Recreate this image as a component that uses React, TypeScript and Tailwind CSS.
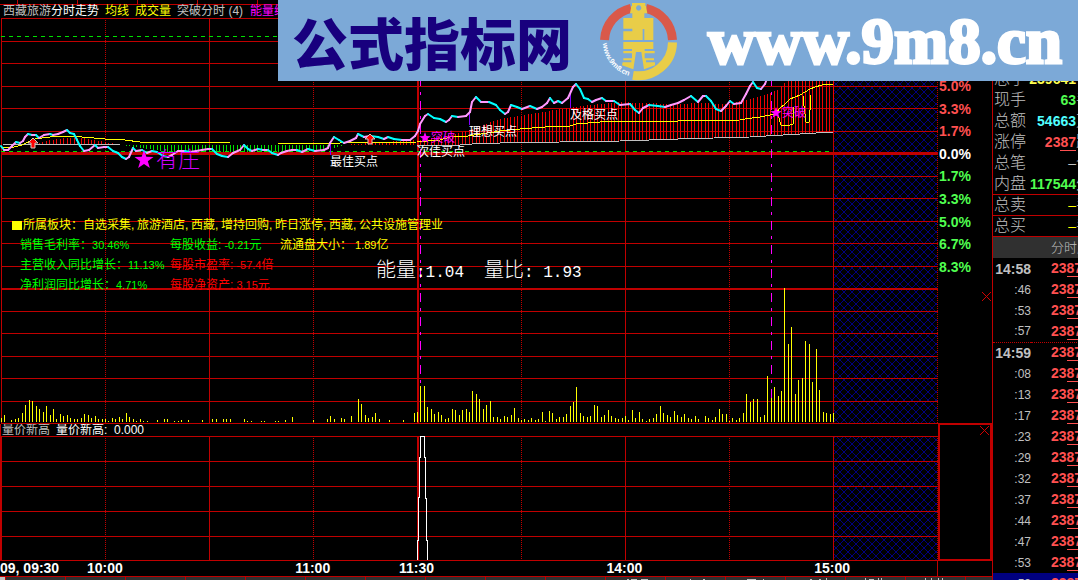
import React from "react";

type Point = [number, number];

const GRID = "#c00000";
const CJK = "font-['Liberation_Sans','Noto_Sans_CJK_SC',sans-serif]";

const PRICE: Point[] = [
  [1, 146], [4, 150], [8, 150], [12, 146], [16, 142], [20, 143], [23, 141], [25, 137], [28, 134], [32, 135],
  [36, 135], [39, 138], [44, 135], [50, 134], [53, 135], [58, 134], [63, 132], [67, 130], [70, 133], [74, 134],
  [77, 140], [80, 146], [84, 151], [89, 150], [95, 145], [98, 148], [104, 147], [108, 147], [113, 151], [118, 153],
  [122, 157], [126, 159], [129, 157], [133, 148], [136, 151], [142, 150], [147, 153], [152, 151], [157, 152],
  [163, 156], [168, 157], [172, 155], [178, 151], [185, 151], [190, 152], [196, 151], [202, 150], [208, 149],
  [212, 149], [217, 154], [222, 156], [228, 157], [233, 153], [240, 150], [244, 145], [248, 149], [252, 151],
  [258, 149], [263, 150], [268, 150], [272, 153], [278, 155], [281, 153], [287, 151], [292, 150], [297, 150],
  [302, 152], [308, 149], [315, 151], [324, 150], [328, 148], [330, 143], [334, 137], [339, 140], [344, 143],
  [350, 141], [356, 138], [358, 134], [364, 137], [370, 136], [378, 137], [384, 139], [388, 137], [394, 139],
  [402, 140], [410, 140], [415, 136], [418, 131], [420, 124], [425, 116], [428, 114], [434, 118], [440, 119],
  [446, 122], [449, 120], [452, 116], [458, 117], [466, 116], [470, 112], [472, 102], [476, 97], [481, 102],
  [489, 102], [496, 105], [500, 110], [505, 114], [508, 112], [511, 105], [517, 107], [522, 109], [530, 106],
  [537, 109], [542, 107], [547, 103], [550, 98], [554, 103], [558, 101], [562, 103], [568, 98], [573, 87],
  [576, 84], [580, 89], [584, 98], [588, 99], [592, 102], [596, 100], [602, 98], [606, 101], [614, 101],
  [620, 105], [630, 104], [635, 110], [639, 113], [643, 108], [649, 105], [658, 106], [665, 107], [671, 105],
  [678, 103], [684, 100], [691, 96], [698, 102], [703, 96], [706, 96], [711, 101], [716, 109], [721, 111],
  [726, 106], [730, 101], [734, 104], [741, 103], [746, 94], [750, 86], [753, 82], [757, 88], [761, 89],
  [765, 84], [768, 76], [780, 50], [800, 24], [833, 22],
];

const AVERAGE: Point[] = [
  [1, 147], [14, 147], [22, 145], [28, 142], [35, 139], [50, 137], [75, 136], [82, 137], [105, 139], [125, 140],
  [140, 142], [175, 142], [230, 143], [278, 143], [340, 143], [417, 142], [440, 140], [450, 137], [468, 136],
  [500, 131], [520, 129], [545, 127], [570, 126], [576, 124], [600, 122], [625, 121], [678, 121], [740, 120],
  [745, 119], [760, 117], [775, 114], [780, 108], [785, 104], [790, 99], [795, 97], [800, 95], [805, 92],
  [810, 89], [815, 87], [822, 85], [833, 84],
];

const BASE: Point[] = [
  [1, 144], [120, 145], [417, 145], [460, 145], [472, 144], [500, 143], [560, 142], [620, 141], [678, 139],
  [750, 137], [800, 134], [833, 132],
];

// Far end of each histogram bar; above the base line it is red, below it green.
const HISTOGRAM: Point[] = [
  [36, 144], [50, 140], [67, 138], [82, 138], [100, 141], [120, 145], [140, 148], [170, 152], [300, 152],
  [330, 149], [345, 145], [380, 142], [417, 140], [450, 135], [470, 130], [485, 124], [500, 119], [530, 114],
  [560, 109], [590, 105], [620, 102], [640, 103], [678, 104], [700, 103], [727, 104], [740, 101], [760, 96],
  [770, 93], [778, 89], [786, 81], [795, 70], [833, 60],
];

const VOLUME: Point[] = [
  [1, 4], [4, 7], [11, 2], [15, 3], [18, 4], [22, 9], [25, 17], [29, 22], [32, 21], [36, 16], [39, 13], [43, 10],
  [46, 16], [50, 7], [53, 13], [56, 3], [60, 8], [63, 6], [67, 7], [70, 4], [74, 3], [77, 3], [81, 4], [84, 8],
  [88, 7], [91, 4], [95, 6], [98, 3], [102, 3], [105, 3], [108, 1], [112, 4], [115, 3], [119, 5], [122, 3],
  [126, 9], [129, 5], [133, 3], [136, 1], [140, 3], [143, 1], [147, 1], [157, 2], [164, 3], [167, 3], [174, 1],
  [178, 1], [181, 2], [188, 2], [202, 2], [212, 3], [216, 3], [223, 3], [226, 3], [230, 3], [244, 3], [247, 1],
  [251, 1], [261, 1], [264, 1], [275, 1], [278, 1], [285, 2], [292, 5], [313, 2], [327, 3], [330, 6], [334, 3],
  [341, 4], [344, 3], [351, 6], [358, 23], [361, 18], [365, 7], [368, 4], [372, 5], [375, 9], [379, 3], [389, 2],
  [403, 2], [414, 9], [417, 10], [420, 36], [424, 36], [427, 15], [431, 13], [434, 8], [438, 10], [441, 7],
  [445, 3], [448, 4], [452, 13], [455, 12], [459, 7], [462, 12], [466, 13], [469, 10], [472, 31], [476, 28],
  [479, 23], [483, 13], [486, 17], [490, 21], [493, 5], [497, 5], [500, 3], [504, 6], [507, 5], [511, 7],
  [514, 14], [518, 4], [521, 2], [524, 3], [528, 2], [531, 4], [535, 2], [538, 3], [542, 10], [545, 1],
  [549, 11], [552, 9], [556, 3], [559, 5], [563, 5], [566, 8], [570, 16], [573, 20], [576, 35], [580, 9],
  [583, 6], [587, 5], [590, 6], [594, 17], [597, 16], [601, 5], [604, 7], [608, 12], [611, 6], [615, 4],
  [618, 3], [622, 4], [625, 6], [628, 2], [632, 12], [635, 4], [639, 10], [642, 3], [646, 1], [649, 3],
  [653, 4], [656, 8], [660, 16], [663, 9], [667, 7], [670, 5], [674, 11], [677, 7], [681, 5], [684, 8],
  [688, 4], [691, 3], [695, 6], [698, 3], [705, 6], [708, 4], [712, 2], [715, 5], [719, 13], [722, 8],
  [726, 8], [729, 1], [732, 4], [736, 2], [739, 4], [743, 9], [746, 28], [750, 20], [753, 23], [757, 23],
  [760, 5], [764, 7], [767, 46], [771, 24], [774, 35], [778, 26], [781, 31], [784, 134], [788, 78], [791, 95],
  [795, 28], [798, 42], [802, 44], [805, 81], [809, 78], [812, 40], [816, 73], [819, 32], [823, 10], [826, 9],
  [830, 8], [833, 9],
];

const toPoints = (pts: Point[]) => pts.map(([x, y]) => `${x},${y}`).join(" ");

function valueAt(pts: Point[], x: number) {
  for (let i = 1; i < pts.length; i++) {
    const [x0, y0] = pts[i - 1];
    const [x1, y1] = pts[i];
    if (x <= x1) return y0 + ((y1 - y0) * (x - x0)) / (x1 - x0);
  }
  return pts[pts.length - 1][1];
}

const BARS = Array.from({ length: 230 }, (_, i) => Math.round(39 + (i * 104) / 30)).filter((x) => x <= 833);

function Grid({ rows, top, bottom }: { rows: number[]; top: number; bottom: number }) {
  return (
    <g stroke={GRID} strokeWidth="1" shapeRendering="crispEdges">
      {rows.map((y) => (
        <line key={y} x1="1" x2="938" y1={y + 0.5} y2={y + 0.5} />
      ))}
      {[1, 209, 625, 833].map((x) => (
        <line key={x} x1={x + 0.5} x2={x + 0.5} y1={top} y2={bottom} />
      ))}
      {[105, 313, 521, 729, 937].map((x) => (
        <line key={x} x1={x + 0.5} x2={x + 0.5} y1={top} y2={bottom} strokeDasharray="1 1" />
      ))}
      <line x1="418" x2="418" y1={top} y2={bottom} strokeWidth="2" />
    </g>
  );
}

function Hatch({ id }: { id: string }) {
  return (
    <defs>
      <pattern id={id} width="8" height="8" patternUnits="userSpaceOnUse">
        <path d="M0 0L8 8M8 0L0 8" stroke="#000080" strokeWidth="1" shapeRendering="crispEdges" />
      </pattern>
    </defs>
  );
}

function Star({ x, y, r }: { x: number; y: number; r: number }) {
  const pts = Array.from({ length: 10 }, (_, i): Point => {
    const a = (Math.PI * i) / 5 - Math.PI / 2;
    const k = i % 2 ? r * 0.4 : r;
    return [x + k * Math.cos(a), y + k * Math.sin(a)];
  });
  return <polygon points={toPoints(pts)} fill="#ff00ff" />;
}

function UpArrow({ x, y }: { x: number; y: number }) {
  return (
    <path
      d={`M${x} ${y - 5}l5 5h-3v5h-4v-5h-3z`}
      fill="#ff0000"
      stroke="#d8c8c0"
      strokeWidth="1"
    />
  );
}

function PriceChart() {
  const rows = [18, 41, 63, 86, 108, 131, 176, 198, 221, 243, 266, 311, 333, 356, 378, 401, 423];
  return (
    <svg viewBox="0 18 938 406" className="block h-auto w-full" role="img" aria-label="分时走势">
      <Hatch id="hatch-price" />
      <rect x="834" y="18" width="103" height="405" fill="url(#hatch-price)" />
      <Grid rows={rows} top={18} bottom={424} />
      <g shapeRendering="crispEdges">
        <rect x="1" y="152" width="937" height="3" fill={GRID} />
        <rect x="1" y="288" width="937" height="2" fill={GRID} />
        <path d="M1 36.5H833M1 151.5H833" stroke="#00e000" strokeDasharray="4 4" />
        <path d="M420.5 77V422M771.5 77V422" stroke="#ff00ff" strokeDasharray="9 6 3 6" />
        {BARS.map((x) => {
          const base = Math.round(valueAt(BASE, x));
          const end = Math.round(valueAt(HISTOGRAM, x));
          return (
            <line key={x} x1={x + 0.5} x2={x + 0.5} y1={base} y2={end} stroke={end < base ? "#f00000" : "#00e000"} />
          );
        })}
        <g fill="#ffff00">
          {VOLUME.map(([x, h]) => (
            <rect key={x} x={x} y={422 - h} width="1" height={h} />
          ))}
        </g>
        <path d="M330.5 142v13M469.5 112v13M570.5 94v14" stroke="#8000ff" />
        <polyline points={toPoints(BASE)} fill="none" stroke="#c0c0c0" />
        <polyline points={toPoints(AVERAGE)} fill="none" stroke="#ffff00" />
        <path
          d="M776 113l3 5l2 7h9l3-1v-12l1-5M803 96l1 10l2 16h3l1-12v-15"
          fill="none"
          stroke="#ffff00"
        />
      </g>
      <g strokeWidth="2" strokeLinecap="round">
        {PRICE.slice(1).map(([x, y], i) => {
          const [px, py] = PRICE[i];
          return <line key={x} x1={px} y1={py} x2={x} y2={y} stroke={y > py ? "#00ffff" : "#ff99ff"} />;
        })}
      </g>
      <UpArrow x={33} y={143} />
      <UpArrow x={370} y={139} />
      <Star x={144} y={160} r={10} />
      <Star x={425} y={138} r={6} />
      <Star x={776} y={113} r={6} />
      <g className={CJK} fontSize="12" fill="#ffffff">
        <text x="330" y="166">最佳买点</text>
        <text x="417" y="156">次佳买点</text>
        <text x="469" y="136">理想买点</text>
        <text x="570" y="119">及格买点</text>
        <text x="431" y="142" fill="#ff00ff">突破</text>
        <text x="782" y="117" fill="#ff00ff">突破</text>
        <text x="156" y="167" fontSize="22" fontWeight="300" fill="#d000ff">有庄</text>
      </g>
    </svg>
  );
}

function SignalChart() {
  return (
    <svg viewBox="0 436 938 125" className="block h-auto w-full" role="img" aria-label="量价新高">
      <Hatch id="hatch-signal" />
      <rect x="834" y="436" width="103" height="124" fill="url(#hatch-signal)" />
      <Grid rows={[436, 461, 486, 511, 536, 560]} top={436} bottom={561} />
      <rect x="0" y="436" width="2" height="125" fill={GRID} />
      <path
        d="M417.5 560V540H418.5V497H419.5V457H420.5V436.5H424.5V457H425.5V498H426.5V540H427.5V560"
        fill="none"
        stroke="#ffffff"
        shapeRendering="crispEdges"
      />
    </svg>
  );
}

function Comma() {
  return <span className="inline-block w-[6px]">,</span>;
}

function StockInfo() {
  const sectors = ["自选采集", "旅游酒店", "西藏", "增持回购", "昨日涨停", "西藏", "公共设施管理业"];
  return (
    <div className="absolute left-3 top-[197px] whitespace-nowrap text-[12px] leading-5 text-[#00ff00]">
      <p className="flex items-center text-[#ffff00]">
        <span className="mr-px h-[9px] w-[10px] bg-[#ffff00]" />
        <span>
          所属板块：
          {sectors.map((s, i) => (
            <React.Fragment key={i}>
              {i > 0 && <Comma />}
              {s}
            </React.Fragment>
          ))}
        </span>
      </p>
      <div className="grid grid-cols-[150px_110px_auto] pl-2">
        <p>销售毛利率：<span className="text-[11px]">30.46%</span></p>
        <p>每股收益:<span className="text-[11px]"> -0.21</span>元</p>
        <p className="text-[#ffff00]">流通盘大小：<span className="text-[11px]"> 1.89</span>亿</p>
        <p>主营收入同比增长：<span className="text-[11px]">11.13%</span></p>
        <p className="col-span-2 text-[#ff0000]">每股市盈率:<span className="text-[11px]"> -57.4</span>倍</p>
        <p>净利润同比增长：<span className="text-[11px]">4.71%</span></p>
        <p className="col-span-2 text-[#ff0000]">每股净资产:<span className="text-[11px]"> 3.15</span>元</p>
      </div>
    </div>
  );
}

function EnergyReadout() {
  return (
    <div className="absolute left-[376px] top-[242px] flex gap-5 whitespace-nowrap font-['Liberation_Mono','Noto_Sans_CJK_SC',monospace] text-[16px] leading-6 text-white">
      <p><span className="text-[20px] font-light">能量</span>:1.04</p>
      <p><span className="text-[20px] font-light">量比</span>: 1.93</p>
    </div>
  );
}

function Ticks({ first }: { first: string }) {
  return (
    <div className="flex h-full overflow-hidden">
      <div className={`${first} shrink-0 border-r border-[#c00000]`} />
      {Array.from({ length: 16 }, (_, i) => (
        <div key={i} className="w-[60px] shrink-0 border-r border-[#c00000]" />
      ))}
    </div>
  );
}

function TabStrip() {
  return (
    <svg
      viewBox="0 0 993 3"
      className="block h-[3px] w-full bg-[#303030]"
      preserveAspectRatio="xMinYMin slice"
      shapeRendering="crispEdges"
      aria-hidden="true"
    >
      <rect width="5" height="3" fill="#c0c0c0" />
      <path
        d={Array.from({ length: 17 }, (_, i) => `M${5.5 + i * 60} 0v3`).join("")}
        stroke={GRID}
      />
      <path
        d="M627 2.500h2M631 2.500h6M641 2.500h7M690 2.500h1M703 2.500h2M747 2.500h9M763 2.500h1M810 2.500h2M819 2.500h2M826 1v2M865 1v2M869 2.500h5M878 1v2M881 1v2M925 1v2M931 1v2M938 1v2M942 1v2"
        stroke="#c0c0c0"
      />
    </svg>
  );
}

function CloseButton() {
  return (
    <button type="button" aria-label="关闭" className="block h-[11px] w-[11px]">
      <svg viewBox="0 0 11 11" className="block h-full w-full">
        <path d="M1 1L10 10M10 1L1 10" stroke="#d00000" strokeWidth="1" />
      </svg>
    </button>
  );
}

function Axis() {
  const labels = ["5.0%", "3.3%", "1.7%", "0.0%", "1.7%", "3.3%", "5.0%", "6.7%", "8.3%"];
  return (
    <div className="flex w-[55px] shrink-0 flex-col border-r border-[#c00000] pt-[75px] text-sm font-bold">
      <ol className="grid h-[203px] auto-rows-fr items-center pl-px leading-4">
        {labels.map((l, i) => (
          <li key={i} className={i < 3 ? "text-[#ff5050]" : i === 3 ? "text-white" : "text-[#50ff50]"}>
            {l}
          </li>
        ))}
      </ol>
      <div className="flex h-[145px] justify-end pt-[13px]">
        <CloseButton />
      </div>
      <div className="flex h-[138px] justify-end border-2 border-[#c00000]">
        <CloseButton />
      </div>
    </div>
  );
}

interface Quote {
  label: string;
  value: string;
  unit: string;
  tone: string;
  mark?: string;
  line?: boolean;
}

const QUOTES: Quote[] = [
  { label: "总手", value: "239641", unit: "手", tone: "font-bold text-[#ffff50]" },
  { label: "现手", value: "63", unit: "手", tone: "font-bold text-[#50ff50]" },
  { label: "总额", value: "54663", unit: "万", tone: "font-bold text-[#50ffff]" },
  { label: "涨停", value: "23", mark: "87", unit: "跌", tone: "font-bold text-[#ff5050]" },
  { label: "总笔", value: "–", unit: "个", tone: "text-[#c0c0c0]" },
  { label: "内盘", value: "117544", unit: "外", tone: "font-bold text-[#50ff50]", line: true },
  { label: "总卖", value: "–", unit: "手", tone: "text-[#ffff00]", line: true },
  { label: "总买", value: "–", unit: "手", tone: "text-[#ffff00]", line: true },
];

const TRADES = [
  "14:58", ":46", ":53", ":57", "14:59", ":08", ":13", ":17", ":23", ":29", ":32", ":37", ":44", ":47", ":53", ":59",
];

function QuotePanel() {
  return (
    <aside className="w-[85px] shrink-0 overflow-hidden pt-[69px] text-[#c0c0c0]">
      <dl>
        {QUOTES.map((q) => (
          <div
            key={q.label}
            className={`flex h-[21px] items-center border-b pl-px ${q.line ? "border-[#c00000]" : "border-transparent"}`}
          >
            <dt className="shrink-0 text-base font-light leading-5">{q.label}</dt>
            <dd className={`flex flex-1 justify-end text-sm leading-4 ${q.tone}`}>
              {q.value}
              {q.mark && <span className="border-b border-current">{q.mark}</span>}
            </dd>
            <span className="w-[2px] shrink-0 overflow-hidden text-base font-light leading-5">{q.unit}</span>
          </div>
        ))}
      </dl>
      <h2 className="h-[21px] whitespace-nowrap bg-[#303030] pl-[58px] text-[13px] font-light leading-[21px]">分时成交</h2>
      <table className="w-[98px] table-fixed border-collapse">
        <tbody>
          {TRADES.map((t, i) => {
            const minute = t.length === 5;
            const last = i === TRADES.length - 1;
            return (
              <tr
                key={i}
                className={`h-[21px] ${i === 3 ? "border-b border-dotted border-[#c00000]" : ""} ${last ? "bg-[#000080]" : ""}`}
              >
                <th
                  scope="row"
                  className={`w-[38px] p-0 text-right leading-4 ${minute ? "text-sm font-bold" : "text-xs font-normal"}`}
                >
                  {t}
                </th>
                <td className="p-0 pl-5 text-sm font-bold leading-4 text-[#ff5050]">
                  23<span className="inline-block border-b border-current">87</span>
                </td>
              </tr>
            );
          })}
        </tbody>
      </table>
    </aside>
  );
}

function Logo() {
  return (
    <svg viewBox="0 0 240 240" className="h-20 w-20 shrink-0" role="img" aria-label="www.9m8.cn">
      <g fill="none" strokeWidth="27">
        <path d="M13.500 117A102 102 0 0 1 93 22" stroke="#d9594a" />
        <path d="M138 22A102 102 0 0 1 217.500 117" stroke="#d9594a" />
        <path d="M217.500 124A102 102 0 0 1 99 223" stroke="#e9cd48" />
      </g>
      <g fill="#e9cd48">
        <path
          fillRule="evenodd"
          d="M96 6H136V15H138L142 37H133V51H160V117H133V84H128V117H70V91H97V83H70V51H97V37H90L94 15H96ZM116 13a8 8 0 1 0 .1 0Z"
        />
        <path d="M70 123H160V144H134V150H164V157H134V172H162V178H138V184H165V193L132 205L124 153H108L100 205L66 193L68 184H94V178H70V172H96V157H70V150H96V144H70Z" />
      </g>
      <path id="logo-arc" d="M8 119A110 110 0 0 0 118 229" fill="none" />
      <text fill="#ffffff" fontSize="22" className="font-['Liberation_Sans',sans-serif] font-bold">
        <textPath href="#logo-arc" startOffset="8">www.9m8.cn</textPath>
      </text>
    </svg>
  );
}

function Banner() {
  return (
    <div className="absolute left-[278px] right-0 top-0 flex h-[81px] items-center overflow-hidden whitespace-nowrap bg-[#7ca9d7] pl-[14px]">
      <strong className="font-['Noto_Sans_CJK_SC',sans-serif] text-[56px] font-black leading-[72px] text-[#18007e]">
        公式指标网
      </strong>
      <div className="ml-7">
        <Logo />
      </div>
      <a
        href="#home"
        className="ml-7 font-['Liberation_Serif',serif] text-[65px] font-bold leading-[74px] text-white [-webkit-text-stroke:3px_white]"
      >
        www.9m8.cn
      </a>
    </div>
  );
}

export default function App() {
  return (
    <main className={`relative flex h-screen overflow-hidden bg-black ${CJK}`}>
      <div className="flex min-w-0 flex-1 flex-col">
        <div className="flex shrink-0">
          <section className="flex min-w-0 flex-1 flex-col">
            <div className="h-[5px] border-b border-[#c00000]">
              <Ticks first="w-[18px]" />
            </div>
            <header className="flex h-[13px] items-center whitespace-nowrap pl-[3px] text-[12px] leading-[13px] text-[#c0c0c0]">
              <span>西藏旅游</span>
              <span className="text-white">分时走势</span>
              <span className="ml-[6px] text-[#ffff00]">均线</span>
              <span className="ml-[6px] text-[#ffff00]">成交量</span>
              <span className="ml-[6px] w-[73px]">突破分时 (4)</span>
              <span className="text-[#ff00ff]">能量线</span>
            </header>
            <div className="relative">
              <PriceChart />
              <StockInfo />
              <EnergyReadout />
            </div>
            <div className="flex h-3 items-center gap-[6px] whitespace-nowrap border-l border-[#c00000] pl-px text-[12px] leading-3 text-[#c0c0c0]">
              <span>量价新高</span>
              <span className="text-white">量价新高: &nbsp;0.000</span>
            </div>
            <SignalChart />
            <div className="grid h-[15px] grid-cols-[minmax(0,53fr)_repeat(8,minmax(0,104fr))_minmax(0,53fr)] whitespace-nowrap border-r border-[#c00000] text-center text-sm font-bold leading-[15px] text-white">
              <span className="text-left">09, 09:30</span>
              <span>10:00</span>
              <span />
              <span>11:00</span>
              <span>11:30</span>
              <span />
              <span>14:00</span>
              <span />
              <span>15:00</span>
            </div>
          </section>
          <Axis />
        </div>
        <div className="border-r border-t border-[#c00000]">
          <TabStrip />
        </div>
      </div>
      <QuotePanel />
      <Banner />
    </main>
  );
}
